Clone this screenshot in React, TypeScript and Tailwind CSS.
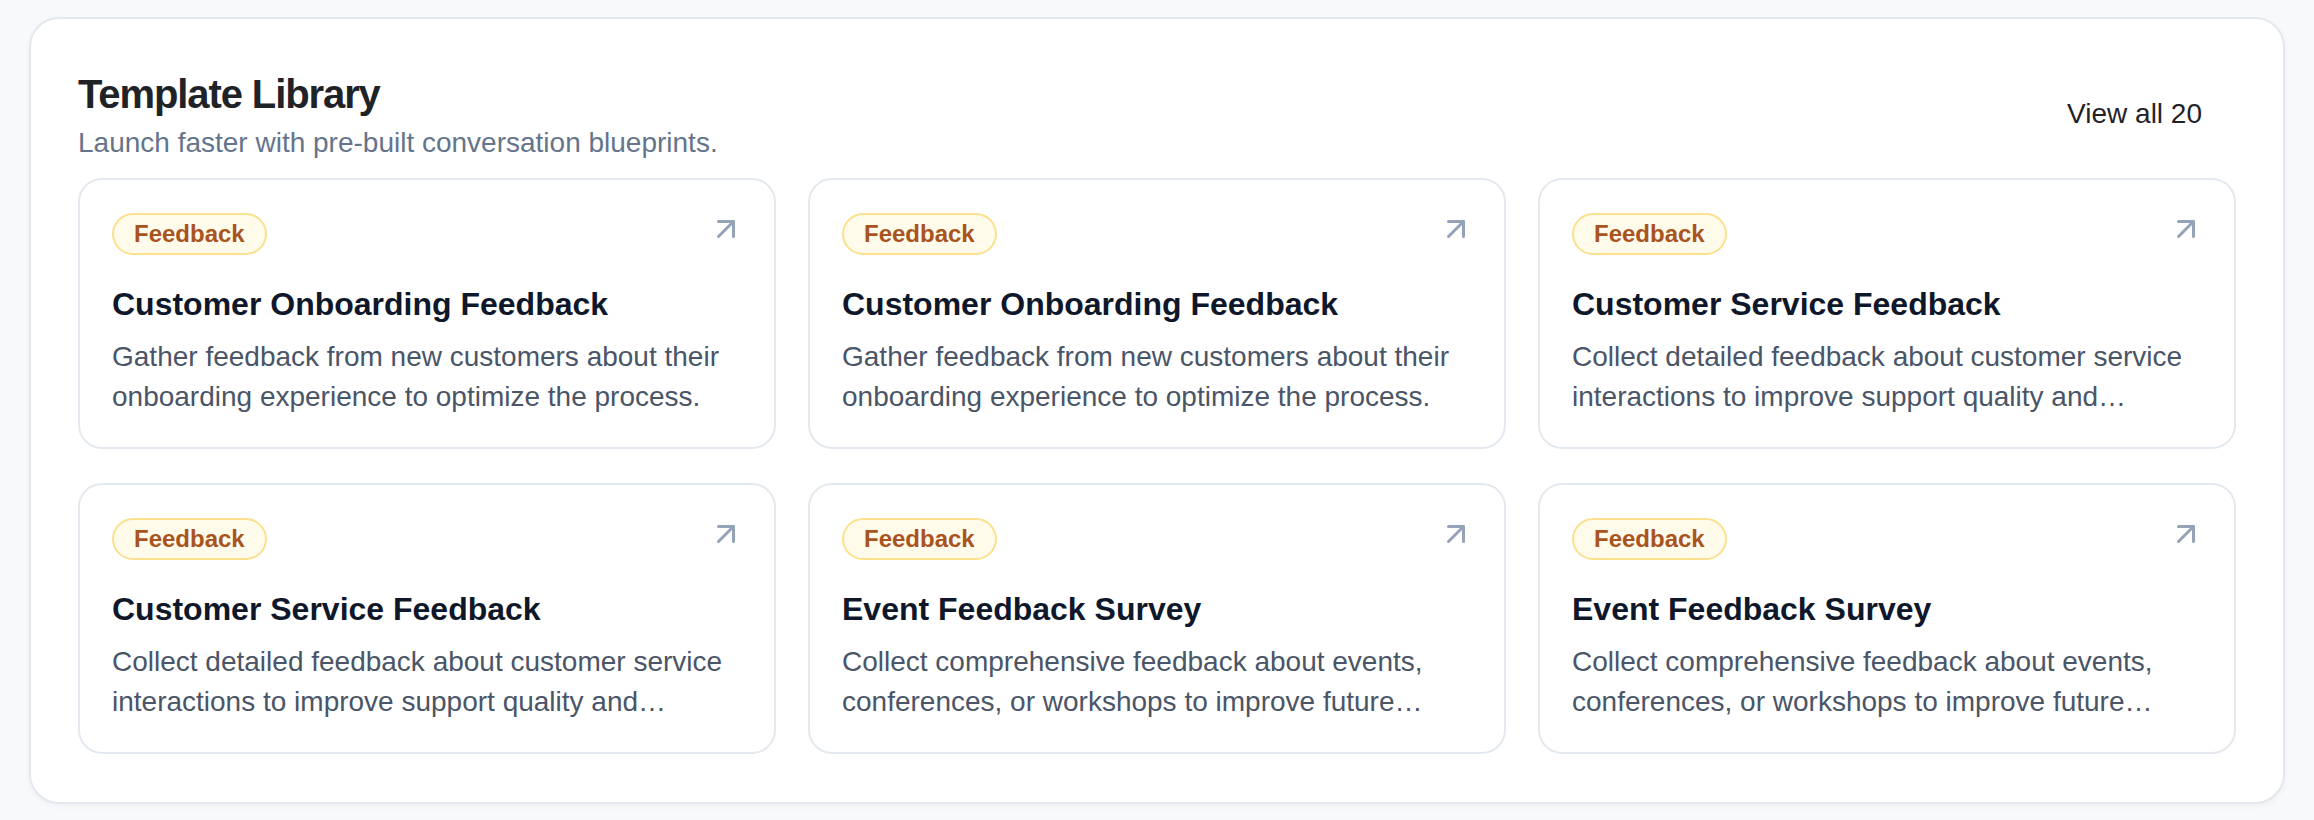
import { ArrowUpRight } from "lucide-react";

const TEMPLATES = [
  {
    tag: "Feedback",
    title: "Customer Onboarding Feedback",
    body: "Gather feedback from new customers about their onboarding experience to optimize the process.",
  },
  {
    tag: "Feedback",
    title: "Customer Onboarding Feedback",
    body: "Gather feedback from new customers about their onboarding experience to optimize the process.",
  },
  {
    tag: "Feedback",
    title: "Customer Service Feedback",
    body: "Collect detailed feedback about customer service interactions to improve support quality and customer satisfaction.",
  },
  {
    tag: "Feedback",
    title: "Customer Service Feedback",
    body: "Collect detailed feedback about customer service interactions to improve support quality and customer satisfaction.",
  },
  {
    tag: "Feedback",
    title: "Event Feedback Survey",
    body: "Collect comprehensive feedback about events, conferences, or workshops to improve future event planning.",
  },
  {
    tag: "Feedback",
    title: "Event Feedback Survey",
    body: "Collect comprehensive feedback about events, conferences, or workshops to improve future event planning.",
  },
];

function TemplateCard({ tag, title, body }: { tag: string; title: string; body: string }) {
  return (
    <div className="flex h-[271px] flex-col rounded-[24px] border-2 border-[#e4e9f0] bg-white pb-8 pl-[32px] pr-[28px] pt-[33px]">
      <div className="flex items-start justify-between">
        <span className="rounded-full border-2 border-[#fbe08d] bg-[#fffbea] px-[20px] text-[24px] font-bold leading-[38px] text-[#a9531f]">
          {tag}
        </span>
        <ArrowUpRight size={36} strokeWidth={2} className="-mt-[2px] mr-[2px] text-[#94a3b8]" />
      </div>
      <h3 className="mt-[29px] text-[32px] font-bold leading-[40px] text-[#0f172a]">{title}</h3>
      <p className="mt-[13px] line-clamp-2 pr-4 text-[28px] leading-[40px] text-[#4a5567]">{body}</p>
    </div>
  );
}

export default function App() {
  return (
    <div
      className="min-h-screen bg-[#f7f9fb] px-[29px] pt-[17px] pb-4"
      style={{ fontFamily: '"Liberation Sans", Arial, sans-serif' }}
    >
      <section className="rounded-[30px] border-2 border-[#e3e8ef] bg-white px-[47px] pt-[51px] pb-[48px] shadow-[0_2px_6px_rgba(15,23,42,0.04)]">
        <div className="flex items-center justify-between">
          <div>
            <h2 className="text-[40px] font-bold leading-[48px] tracking-[-1.1px] text-[#1f2328]">Template Library</h2>
            <p className="mt-[5px] text-[28px] leading-[40px] text-[#64748b]">
              Launch faster with pre-built conversation blueprints.
            </p>
          </div>
          <button className="mb-[6px] px-[34px] py-3 text-[28px] leading-[40px] text-[#1f2328]">View all 20</button>
        </div>

        <div className="mt-[15px] grid grid-cols-3 gap-x-8 gap-y-[34px]">
          {TEMPLATES.map((t, i) => (
            <TemplateCard key={i} {...t} />
          ))}
        </div>
      </section>
    </div>
  );
}
